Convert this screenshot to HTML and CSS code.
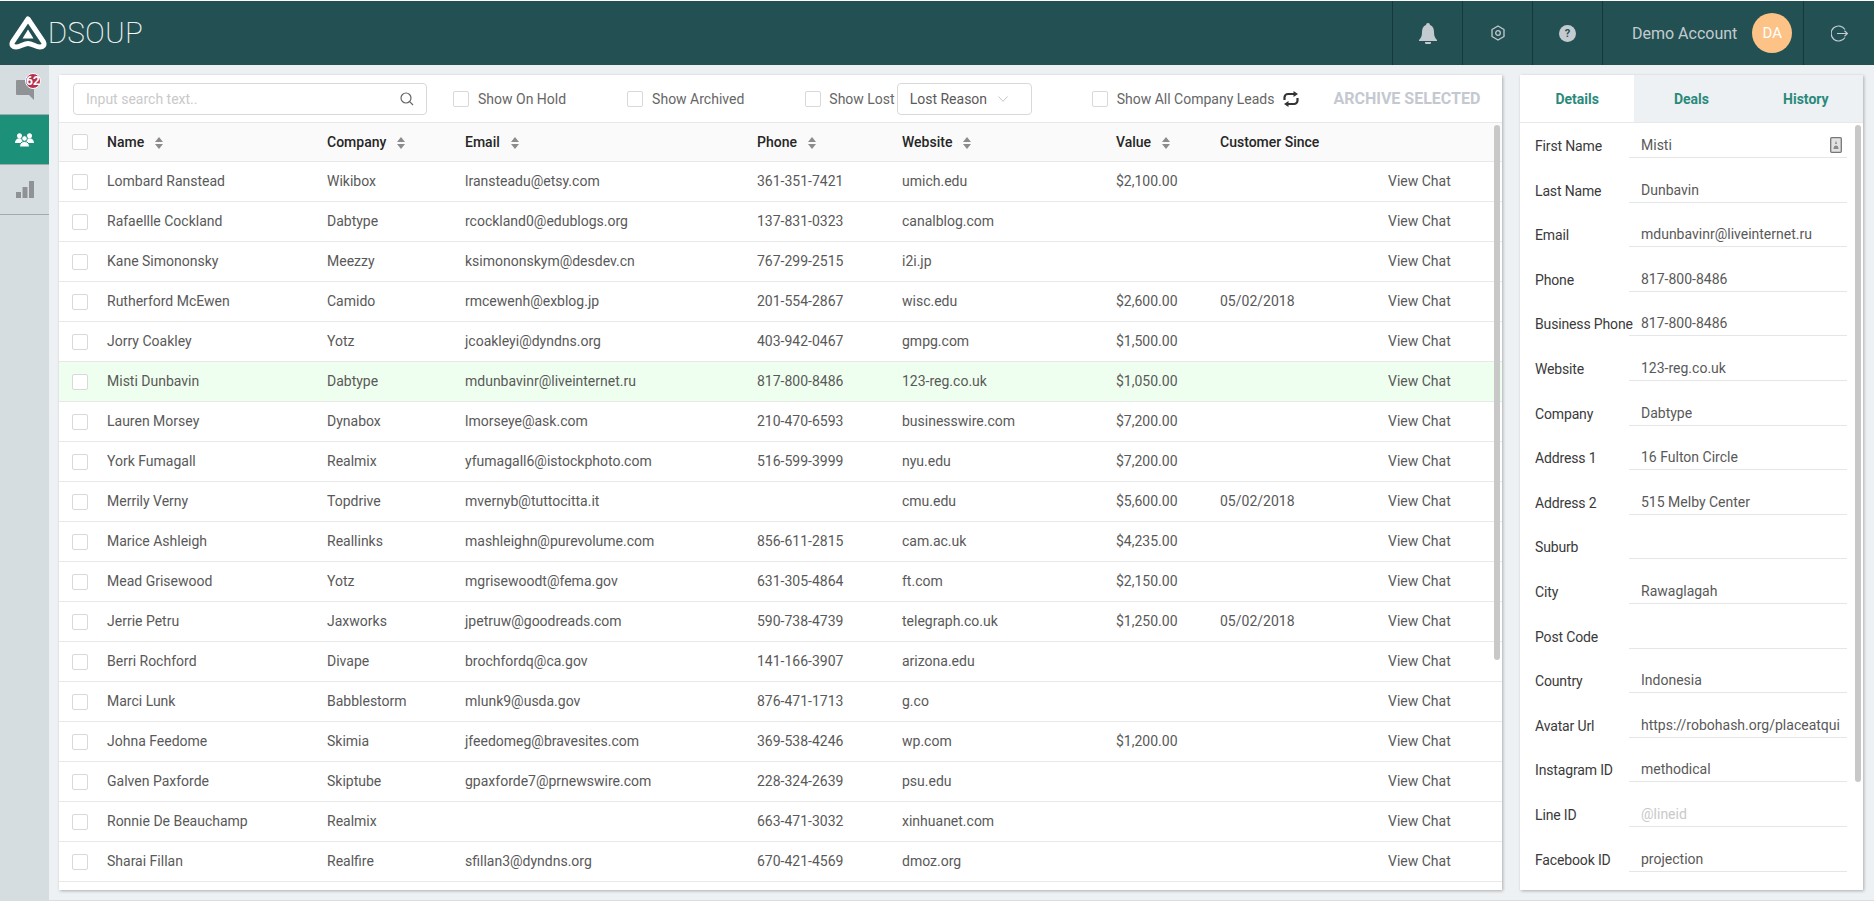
FILE: index.html
```html
<!DOCTYPE html>
<html lang="en">
<head>
<meta charset="utf-8">
<title>Adsoup</title>
<link rel="stylesheet" href="styles.css">
</head>
<body>
<svg class="defs" width="0" height="0" aria-hidden="true">
  <symbol id="sort" viewBox="0 0 8 12"><path d="M4 0 8 5H0zM0 7h8l-4 5z"/></symbol>
</svg>
<div class="app">
  <header class="topbar">
    <div class="brand">
      <svg class="brand-mark" viewBox="0 0 38 34" width="38" height="34"><path d="M19 3 34.500 26c1.500 3-.500 5-3.500 5-4 0-8-3.500-12-3.500S11 31 7 31c-3 0-5-2-3.500-5z" fill="none" stroke="#fff" stroke-width="5" stroke-linejoin="round"/><path d="M19 13.500l5.500 9h-11z" fill="#fff"/></svg>
      <span class="brand-name">DSOUP</span>
    </div>
    <div class="top-actions">
      <div class="top-cell"><svg width="20" height="21" viewBox="0 0 20 21"><path d="M10 0a2 2 0 0 1 2 2c3 1 4 4 4 7 0 4 1 6 3 8v1H1v-1c2-2 3-4 3-8 0-3 1-6 4-7a2 2 0 0 1 2-2zM7 19h6a3 3 0 0 1-6 0z" fill="#c4cbd0"/></svg></div>
      <div class="top-cell"><svg width="16" height="16" viewBox="0 0 16 16" fill="none" stroke="#c4cbd0" stroke-width="1.300" stroke-linejoin="round"><path d="M8 1 14 4.500v7L8 15l-6-3.500v-7z"/><circle cx="8" cy="8" r="2.300"/></svg></div>
      <div class="top-cell"><span class="help">?</span></div>
      <div class="top-cell account"><span class="account-name">Demo Account</span><span class="avatar">DA</span></div>
      <div class="top-cell logout"><svg width="17" height="17" viewBox="0 0 17 17" fill="none" stroke="#c4cbd0" stroke-width="1.200"><path d="M14 4.500A7.500 7.500 0 1 0 14 12.500"/><path d="M6 8.500h10.500M13.500 5.800l3 2.700-3 2.700"/></svg></div>
    </div>
  </header>
  <div class="body">
    <nav class="sidebar">
      <a class="side-item"><svg width="18" height="20" viewBox="0 0 18 20"><path d="M1 0h16a1 1 0 0 1 1 1v19l-5-5H1a1 1 0 0 1-1-1V1a1 1 0 0 1 1-1z" fill="#8f9396"/></svg><span class="badge">62</span></a>
      <a class="side-item active"><svg width="19" height="14" viewBox="0 0 19 14" fill="#fff"><circle cx="4.500" cy="2.800" r="2.500"/><circle cx="14.500" cy="2.800" r="2.500"/><path d="M0 10c0-3 2-4.800 4.500-4.800S9 7 9 10zM10 10c0-3 2-4.800 4.500-4.800S19 7 19 10z"/><circle cx="9.500" cy="5.500" r="2.800" stroke="#1c9078"/><path d="M4.500 14c0-3.500 2-5.500 5-5.500s5 2 5 5.500z" stroke="#1c9078"/></svg></a>
      <a class="side-item"><svg width="18" height="17" viewBox="0 0 18 17" fill="#8f9396"><path d="M0 11h5v6H0zM6.500 6h5v11h-5zM13 0h5v17h-5z"/></svg></a>
    </nav>
    <main class="main">
      <section class="card leads">
        <div class="toolbar">
          <div class="search"><span class="placeholder">Input search text..</span><svg width="14" height="14" viewBox="0 0 14 14" fill="none" stroke="#666" stroke-width="1.200"><circle cx="6" cy="6" r="5"/><path d="M9.700 9.700 13 13"/></svg></div>
          <label class="filter f-hold"><span class="check"></span>Show On Hold</label>
          <label class="filter f-arch"><span class="check"></span>Show Archived</label>
          <label class="filter f-lost"><span class="check"></span>Show Lost</label>
          <div class="select">Lost Reason<svg width="10" height="6" viewBox="0 0 10 6" fill="none" stroke="#c4c4c4"><path d="M.5.500 5 5.300 9.500.500"/></svg></div>
          <label class="filter f-all"><span class="check"></span>Show All Company Leads</label>
          <svg class="retweet" width="18" height="16" viewBox="0 0 18 16" fill="none" stroke="#333" stroke-width="2.200"><path d="M2.500 9V6.500A3.500 3.500 0 0 1 6 3h6M15.500 7v2.500A3.500 3.500 0 0 1 12 13H6"/><path d="M11.500 0l4.500 3-4.500 3zM6.500 10 2 13l4.500 3z" fill="#333" stroke="none"/></svg>
          <span class="archive">ARCHIVE SELECTED</span>
        </div>
        <div class="table-wrap">
          <table class="grid">
            <colgroup><col class="c-check"><col class="c-name"><col class="c-company"><col class="c-email"><col class="c-phone"><col class="c-site"><col class="c-value"><col class="c-since"><col class="c-chat"></colgroup>
            <thead><tr>
              <th><span class="check"></span></th>
              <th>Name<svg class="sort"><use href="#sort"/></svg></th>
              <th>Company<svg class="sort"><use href="#sort"/></svg></th>
              <th>Email<svg class="sort"><use href="#sort"/></svg></th>
              <th>Phone<svg class="sort"><use href="#sort"/></svg></th>
              <th>Website<svg class="sort"><use href="#sort"/></svg></th>
              <th>Value<svg class="sort"><use href="#sort"/></svg></th>
              <th>Customer Since</th>
              <th></th>
            </tr></thead>
            <tbody>
              <tr><td><span class="check"></span></td><td>Lombard Ranstead</td><td>Wikibox</td><td>lransteadu@etsy.com</td><td>361-351-7421</td><td>umich.edu</td><td>$2,100.00</td><td></td><td>View Chat</td></tr>
              <tr><td><span class="check"></span></td><td>Rafaellle Cockland</td><td>Dabtype</td><td>rcockland0@edublogs.org</td><td>137-831-0323</td><td>canalblog.com</td><td></td><td></td><td>View Chat</td></tr>
              <tr><td><span class="check"></span></td><td>Kane Simononsky</td><td>Meezzy</td><td>ksimononskym@desdev.cn</td><td>767-299-2515</td><td>i2i.jp</td><td></td><td></td><td>View Chat</td></tr>
              <tr><td><span class="check"></span></td><td>Rutherford McEwen</td><td>Camido</td><td>rmcewenh@exblog.jp</td><td>201-554-2867</td><td>wisc.edu</td><td>$2,600.00</td><td>05/02/2018</td><td>View Chat</td></tr>
              <tr><td><span class="check"></span></td><td>Jorry Coakley</td><td>Yotz</td><td>jcoakleyi@dyndns.org</td><td>403-942-0467</td><td>gmpg.com</td><td>$1,500.00</td><td></td><td>View Chat</td></tr>
              <tr class="selected"><td><span class="check"></span></td><td>Misti Dunbavin</td><td>Dabtype</td><td>mdunbavinr@liveinternet.ru</td><td>817-800-8486</td><td>123-reg.co.uk</td><td>$1,050.00</td><td></td><td>View Chat</td></tr>
              <tr><td><span class="check"></span></td><td>Lauren Morsey</td><td>Dynabox</td><td>lmorseye@ask.com</td><td>210-470-6593</td><td>businesswire.com</td><td>$7,200.00</td><td></td><td>View Chat</td></tr>
              <tr><td><span class="check"></span></td><td>York Fumagall</td><td>Realmix</td><td>yfumagall6@istockphoto.com</td><td>516-599-3999</td><td>nyu.edu</td><td>$7,200.00</td><td></td><td>View Chat</td></tr>
              <tr><td><span class="check"></span></td><td>Merrily Verny</td><td>Topdrive</td><td>mvernyb@tuttocitta.it</td><td></td><td>cmu.edu</td><td>$5,600.00</td><td>05/02/2018</td><td>View Chat</td></tr>
              <tr><td><span class="check"></span></td><td>Marice Ashleigh</td><td>Reallinks</td><td>mashleighn@purevolume.com</td><td>856-611-2815</td><td>cam.ac.uk</td><td>$4,235.00</td><td></td><td>View Chat</td></tr>
              <tr><td><span class="check"></span></td><td>Mead Grisewood</td><td>Yotz</td><td>mgrisewoodt@fema.gov</td><td>631-305-4864</td><td>ft.com</td><td>$2,150.00</td><td></td><td>View Chat</td></tr>
              <tr><td><span class="check"></span></td><td>Jerrie Petru</td><td>Jaxworks</td><td>jpetruw@goodreads.com</td><td>590-738-4739</td><td>telegraph.co.uk</td><td>$1,250.00</td><td>05/02/2018</td><td>View Chat</td></tr>
              <tr><td><span class="check"></span></td><td>Berri Rochford</td><td>Divape</td><td>brochfordq@ca.gov</td><td>141-166-3907</td><td>arizona.edu</td><td></td><td></td><td>View Chat</td></tr>
              <tr><td><span class="check"></span></td><td>Marci Lunk</td><td>Babblestorm</td><td>mlunk9@usda.gov</td><td>876-471-1713</td><td>g.co</td><td></td><td></td><td>View Chat</td></tr>
              <tr><td><span class="check"></span></td><td>Johna Feedome</td><td>Skimia</td><td>jfeedomeg@bravesites.com</td><td>369-538-4246</td><td>wp.com</td><td>$1,200.00</td><td></td><td>View Chat</td></tr>
              <tr><td><span class="check"></span></td><td>Galven Paxforde</td><td>Skiptube</td><td>gpaxforde7@prnewswire.com</td><td>228-324-2639</td><td>psu.edu</td><td></td><td></td><td>View Chat</td></tr>
              <tr><td><span class="check"></span></td><td>Ronnie De Beauchamp</td><td>Realmix</td><td></td><td>663-471-3032</td><td>xinhuanet.com</td><td></td><td></td><td>View Chat</td></tr>
              <tr><td><span class="check"></span></td><td>Sharai Fillan</td><td>Realfire</td><td>sfillan3@dyndns.org</td><td>670-421-4569</td><td>dmoz.org</td><td></td><td></td><td>View Chat</td></tr>
            </tbody>
          </table>
          <div class="scroll-thumb leads-thumb"></div>
        </div>
      </section>
      <aside class="card details">
        <div class="tabs">
          <span class="tab current">Details</span>
          <span class="tab">Deals</span>
          <span class="tab">History</span>
        </div>
        <div class="form">
          <div class="field"><span class="label">First Name</span><span class="value">Misti<svg class="card-icon" width="12" height="16" viewBox="0 0 12 16"><rect x=".7" y=".7" width="10.600" height="14.600" rx="1" fill="#e2e2e2" stroke="#777" stroke-width="1.300"/><path d="M6 3.500l1 3.500H5zM3.500 12c0-2.500 1-3.500 2.500-3.500S8.500 9.500 8.500 12z" fill="#8a8a8a"/></svg></span></div>
          <div class="field"><span class="label">Last Name</span><span class="value">Dunbavin</span></div>
          <div class="field"><span class="label">Email</span><span class="value">mdunbavinr@liveinternet.ru</span></div>
          <div class="field"><span class="label">Phone</span><span class="value">817-800-8486</span></div>
          <div class="field"><span class="label">Business Phone</span><span class="value">817-800-8486</span></div>
          <div class="field"><span class="label">Website</span><span class="value">123-reg.co.uk</span></div>
          <div class="field"><span class="label">Company</span><span class="value">Dabtype</span></div>
          <div class="field"><span class="label">Address 1</span><span class="value">16 Fulton Circle</span></div>
          <div class="field"><span class="label">Address 2</span><span class="value">515 Melby Center</span></div>
          <div class="field"><span class="label">Suburb</span><span class="value"></span></div>
          <div class="field"><span class="label">City</span><span class="value">Rawaglagah</span></div>
          <div class="field"><span class="label">Post Code</span><span class="value"></span></div>
          <div class="field"><span class="label">Country</span><span class="value">Indonesia</span></div>
          <div class="field"><span class="label">Avatar Url</span><span class="value">https://robohash.org/placeatqui</span></div>
          <div class="field"><span class="label">Instagram ID</span><span class="value">methodical</span></div>
          <div class="field"><span class="label">Line ID</span><span class="value muted">@lineid</span></div>
          <div class="field"><span class="label">Facebook ID</span><span class="value">projection</span></div>
          <div class="scroll-thumb form-thumb"></div>
        </div>
      </aside>
    </main>
  </div>
</div>
</body>
</html>
```
FILE: styles.css
```css
* { box-sizing: border-box; }
html, body { margin: 0; height: 100%; overflow: hidden; }
body {
  font-family: Roboto, "Liberation Sans", sans-serif;
  font-size: 14px;
  color: #595959;
  background: #fff;
  padding-top: 1px;
}
.defs { position: absolute; }
.app { height: 900px; display: flex; flex-direction: column; }

.topbar {
  height: 64px;
  flex: none;
  background: #235052;
  display: flex;
  justify-content: space-between;
}
.brand { display: flex; align-items: center; padding-left: 9px; }
.brand-name {
  font-size: 29px;
  font-weight: 100;
  letter-spacing: .6px;
  color: #fff;
  margin-left: 1px;
  -webkit-text-stroke: .2px #fff;
}
.top-actions { display: flex; }
.top-cell {
  width: 70px;
  display: flex;
  align-items: center;
  justify-content: center;
  border-left: 1px solid #17383a;
}
.help {
  width: 17px; height: 17px;
  border-radius: 50%;
  background: #c4cbd0;
  color: #235052;
  font-size: 11px;
  font-weight: 700;
  display: flex; align-items: center; justify-content: center;
}
.account { width: 201px; justify-content: flex-start; padding-left: 29px; }
.account-name { font-size: 16px; color: #c4cbd0; }
.avatar {
  width: 40px; height: 40px;
  margin-left: 15px;
  border-radius: 50%;
  background: #fdc285;
  color: #fff;
  font-size: 15px;
  display: flex; align-items: center; justify-content: center;
}
.logout { width: 71px; }

.body { flex: 1; display: flex; min-height: 0; background: #edf1f4; border-bottom: 1px solid #d9dee1; }
.sidebar { width: 49px; flex: none; background: #d5dde0; }
.side-item {
  height: 50px;
  display: flex; align-items: center; justify-content: center;
  border-bottom: 1px solid #a3a9ac;
  position: relative;
}
.side-item.active { background: #1c9078; }
.badge {
  position: absolute;
  left: 25px; top: 8px;
  width: 16px; height: 16px;
  border-radius: 50%;
  background: #b5304f;
  border: 1px solid #fff;
  color: #fff;
  font-size: 12px;
  font-weight: 700;
  line-height: 14px;
  text-align: center;
}
.main { flex: 1; display: flex; gap: 18px; padding: 10px 11px 10px 10px; min-width: 0; }
.card { background: #fff; box-shadow: 1px 1px 3px rgba(0,0,0,.28); display: flex; flex-direction: column; }
.leads { width: 1443px; flex: none; }
.details { flex: 1; min-width: 0; }

.toolbar {
  height: 48px;
  flex: none;
  display: flex;
  align-items: center;
  border-bottom: 1px solid #e8e8e8;
  padding-left: 14px;
}
.search {
  width: 354px; height: 32px;
  border: 1px solid #d9d9d9;
  border-radius: 4px;
  display: flex; align-items: center; justify-content: space-between;
  padding: 0 12px;
}
.placeholder { color: #c9c9c9; }
.check {
  display: inline-block;
  width: 16px; height: 16px;
  border: 1px solid #d9d9d9;
  border-radius: 2px;
  background: #fff;
  vertical-align: middle;
}
.filter { display: flex; align-items: center; gap: 9px; color: #666; }
.f-hold { margin-left: 26px; }
.f-arch { margin-left: 61px; }
.f-lost { margin-left: 61px; gap: 8px; }
.select {
  width: 135px; height: 32px;
  margin-left: 2px;
  border: 1px solid #d9d9d9;
  border-radius: 4px;
  display: flex; align-items: center; justify-content: space-between;
  padding: 0 23px 0 12px;
  flex: none;
}
.f-all { margin-left: 60px; }
.retweet { margin-left: 8px; }
.archive { margin-left: 33px; font-size: 16px; font-weight: 700; color: #c4c9d1; white-space: nowrap; }

.table-wrap { position: relative; flex: 1; min-height: 0; overflow: hidden; }
.grid { width: 100%; table-layout: fixed; border-collapse: collapse; }
.c-check { width: 48px; }
.c-name { width: 220px; }
.c-company { width: 138px; }
.c-email { width: 292px; }
.c-phone { width: 145px; }
.c-site { width: 214px; }
.c-value { width: 104px; }
.c-since { width: 168px; }
.grid th {
  height: 38px;
  padding: 0;
  background: #fafafa;
  border-bottom: 1px solid #e8e8e8;
  text-align: left;
  font-weight: 500;
  color: #262626;
}
.grid td { height: 40px; padding: 0; border-bottom: 1px solid #e8e8e8; white-space: nowrap; }
.grid th:first-child, .grid td:first-child { padding-left: 13px; }
.selected td { background: #efffef; }
.sort { width: 8px; height: 12px; margin-left: 11px; fill: #8c8c8c; vertical-align: -2px; }

.scroll-thumb { position: absolute; width: 6px; border-radius: 3px; background: #c8c8c8; }
.leads-thumb { right: 2px; top: 2px; height: 535px; }
.form-thumb { right: 2px; top: 2px; height: 657px; }

.tabs { height: 48px; flex: none; display: flex; background: #edf1f4; border-bottom: 1px solid #e8e8e8; }
.tab { flex: 1; display: flex; align-items: center; justify-content: center; font-weight: 700; color: #2a8a7a; }
.tab.current { background: #fff; }
.form { position: relative; flex: 1; min-height: 0; padding: 11px 16px 0 15px; overflow: hidden; }
.field { height: 44.600px; display: flex; align-items: flex-start; }
.label { width: 94px; flex: none; color: #3a3a3a; padding-top: 4px; white-space: nowrap; letter-spacing: -.15px; }
.value {
  flex: 1;
  height: 24px;
  min-width: 0;
  display: flex;
  justify-content: space-between;
  align-items: center;
  padding: 0 5px 1px 12px;
  border-bottom: 1px solid #e4e6e8;
  white-space: nowrap;
}
.muted { color: #c9c9c9; }
.card-icon { flex: none; }
```
